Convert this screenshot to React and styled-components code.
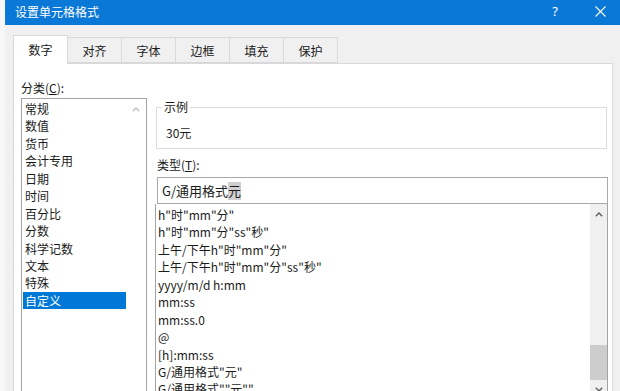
import React from 'react';
import styled, { createGlobalStyle } from 'styled-components';

const Global = createGlobalStyle`
  html, body { margin: 0; padding: 0; }
  body {
    font-family: "Noto Sans CJK SC", "Noto Sans", sans-serif;
    font-size: 12px;
    color: #1b1b1b;
    background: #f7f7f7;
  }
  * { box-sizing: border-box; }
`;

const Screen = styled.div`
  width: 620px;
  height: 391px;
  overflow: hidden;
  display: flex;
  padding-left: 5px;
  background: #f7f7f7;
`;

const Window = styled.div`
  flex: 1;
  min-width: 0;
  display: flex;
  flex-direction: column;
  background: #f0f0f0;
`;

const TitleBar = styled.div`
  flex: none;
  height: 25px;
  display: flex;
  align-items: center;
  padding-left: 10px;
  background: #0a78d6;
  color: #ffffff;
`;

const Title = styled.div`
  flex: 1;
  font-size: 12px;
  line-height: 16px;
  margin-top: -2px;
`;

const TitleButton = styled.div`
  width: 40px;
  height: 25px;
  display: flex;
  align-items: center;
  justify-content: center;
  margin-right: ${(p) => p.$gap || 0}px;
  font-family: "Noto Sans", sans-serif;
  font-size: 13px;
  margin-top: -3px;
`;

const Body = styled.div`
  flex: 1;
  min-height: 0;
  display: flex;
  flex-direction: column;
  padding: 10px 7px 0 8px;
`;

const TabRow = styled.div`
  flex: none;
  height: 28px;
  display: flex;
  align-items: flex-end;
  position: relative;
  z-index: 1;
`;

const Tab = styled.div`
  width: 55px;
  height: ${(p) => (p.$active ? 29 : 26)}px;
  margin-bottom: ${(p) => (p.$active ? -1 : 0)}px;
  margin-left: ${(p) => (p.$first ? 0 : -1)}px;
  background: ${(p) => (p.$active ? '#ffffff' : '#f0f0f0')};
  border: 1px solid #d9d9d9;
  border-bottom: ${(p) => (p.$active ? 'none' : '1px solid #d9d9d9')};
  display: flex;
  align-items: center;
  justify-content: center;
  padding-top: ${(p) => (p.$active ? 0 : 1)}px;
  font-size: 12px;
  line-height: 16px;
  color: #1b1b1b;
  z-index: ${(p) => (p.$active ? 2 : 1)};
`;

const Panel = styled.div`
  flex: 1;
  min-height: 0;
  background: #ffffff;
  border: 1px solid #d9d9d9;
  border-bottom: none;
  display: grid;
  grid-template-columns: 126px 1fr;
  column-gap: 8px;
  padding: 0 4px 0 7px;
`;

const Column = styled.div`
  display: flex;
  flex-direction: column;
  min-height: 0;
`;

const FieldLabel = styled.div`
  line-height: 16px;
  margin-top: ${(p) => p.$top || 0}px;
  margin-left: ${(p) => p.$left || 0}px;
  u { text-decoration: underline; text-underline-offset: 1px; }
`;

const ListBox = styled.div`
  flex: 1;
  min-height: 0;
  display: flex;
  border: 1px solid #a3a3a3;
  border-bottom: none;
  border-top: ${(p) => (p.$attached ? 'none' : '1px solid #a3a3a3')};
  margin-top: ${(p) => p.$top || 0}px;
  background: #ffffff;
  overflow: hidden;
`;

const Items = styled.div`
  flex: 1;
  min-width: 0;
  padding: ${(p) => p.$pad || '1px 0 0 1px'};
`;

const Item = styled.div`
  height: 17.45px;
  line-height: 17px;
  padding-left: ${(p) => p.$indent || 2}px;
  font-size: ${(p) => p.$size || 12}px;
  white-space: nowrap;
  background: ${(p) => (p.$selected ? '#0078d7' : 'transparent')};
  color: ${(p) => (p.$selected ? '#ffffff' : '#1b1b1b')};
`;

const ScrollColumn = styled.div`
  flex: none;
  width: ${(p) => p.$width}px;
  background: ${(p) => p.$track};
  display: flex;
  flex-direction: column;
  align-items: center;
`;

const ScrollButton = styled.div`
  flex: none;
  width: 100%;
  height: ${(p) => p.$height}px;
  display: flex;
  align-items: center;
  justify-content: center;
  margin-top: ${(p) => p.$top || 0}px;
`;

const Thumb = styled.div`
  flex: none;
  width: 100%;
  background: #cdcdcd;
`;

const Group = styled.fieldset`
  margin: 35px 1px 0 1px;
  padding: 0 8px 5px;
  border: 1px solid #dcdcdc;
  min-width: 0;
`;

const Legend = styled.legend`
  padding: 0 2px;
  margin-left: -3px;
  line-height: 16px;
  font-size: 12px;
  color: #1b1b1b;
`;

const Sample = styled.div`
  margin: 8px 0 0 1px;
  line-height: 20px;
  font-size: 12px;
`;

const TypeInput = styled.div`
  flex: none;
  height: 27px;
  margin: 4px 0 0 2px;
  border: 1px solid #a9a9a9;
  padding-left: 4px;
  display: flex;
  align-items: center;
  font-size: 13px;
  line-height: 18px;
  color: #1b1b1b;
`;

const Mark = styled.span`
  background: #cfcfcf;
`;

const Chevron = ({ down, color = '#5f5f5f' }) => (
  <svg width="8" height="5" viewBox="0 0 8 5">
    <path
      d={down ? 'M0.8 0.8 L4 4 L7.2 0.8' : 'M0.8 4.2 L4 1 L7.2 4.2'}
      fill="none"
      stroke={color}
      strokeWidth="1.4"
    />
  </svg>
);

const CloseIcon = () => (
  <svg width="11" height="11" viewBox="0 0 11 11">
    <path d="M0.5 0.5 L10.5 10.5 M10.5 0.5 L0.5 10.5" stroke="#ffffff" strokeWidth="1.1" />
  </svg>
);

const tabs = ['数字', '对齐', '字体', '边框', '填充', '保护'];
const categories = ['常规', '数值', '货币', '会计专用', '日期', '时间', '百分比', '分数', '科学记数', '文本', '特殊', '自定义'];
const formats = [
  'h"时"mm"分"',
  'h"时"mm"分"ss"秒"',
  '上午/下午h"时"mm"分"',
  '上午/下午h"时"mm"分"ss"秒"',
  'yyyy/m/d h:mm',
  'mm:ss',
  'mm:ss.0',
  '@',
  '[h]:mm:ss',
  'G/通用格式"元"',
  'G/通用格式""元""',
];

export default function App() {
  return (
    <>
      <Global />
      <Screen>
        <Window>
          <TitleBar>
            <Title>设置单元格格式</Title>
            <TitleButton $gap={5}>?</TitleButton>
            <TitleButton>
              <CloseIcon />
            </TitleButton>
          </TitleBar>
          <Body>
            <TabRow>
              {tabs.map((t, i) => (
                <Tab key={t} $active={i === 0} $first={i === 0}>
                  {t}
                </Tab>
              ))}
            </TabRow>
            <Panel>
              <Column>
                <FieldLabel $top={16}>
                  分类(<u>C</u>):
                </FieldLabel>
                <ListBox $top={2}>
                  <Items>
                    {categories.map((c) => (
                      <Item key={c} $selected={c === '自定义'}>
                        {c}
                      </Item>
                    ))}
                  </Items>
                  <ScrollColumn $width={20} $track="#ffffff">
                    <ScrollButton $height={20}>
                      <Chevron color="#c4c4c4" />
                    </ScrollButton>
                  </ScrollColumn>
                </ListBox>
              </Column>
              <Column>
                <Group>
                  <Legend>示例</Legend>
                  <Sample>30元</Sample>
                </Group>
                <FieldLabel $top={8} $left={2}>
                  类型(<u>T</u>):
                </FieldLabel>
                <TypeInput>
                  G/通用格式<Mark>元</Mark>
                </TypeInput>
                <ListBox $attached>
                  <Items $pad="2px 0 0 1px">
                    {formats.map((f) => (
                      <Item key={f} $indent={1}>
                        {f}
                      </Item>
                    ))}
                  </Items>
                  <ScrollColumn $width={17} $track="#f0f0f0">
                    <ScrollButton $height={20}>
                      <Chevron />
                    </ScrollButton>
                    <Thumb style={{ marginTop: 121, height: 35 }} />
                    <ScrollButton $height={16} $top={1}>
                      <Chevron down />
                    </ScrollButton>
                  </ScrollColumn>
                </ListBox>
              </Column>
            </Panel>
          </Body>
        </Window>
      </Screen>
    </>
  );
}
